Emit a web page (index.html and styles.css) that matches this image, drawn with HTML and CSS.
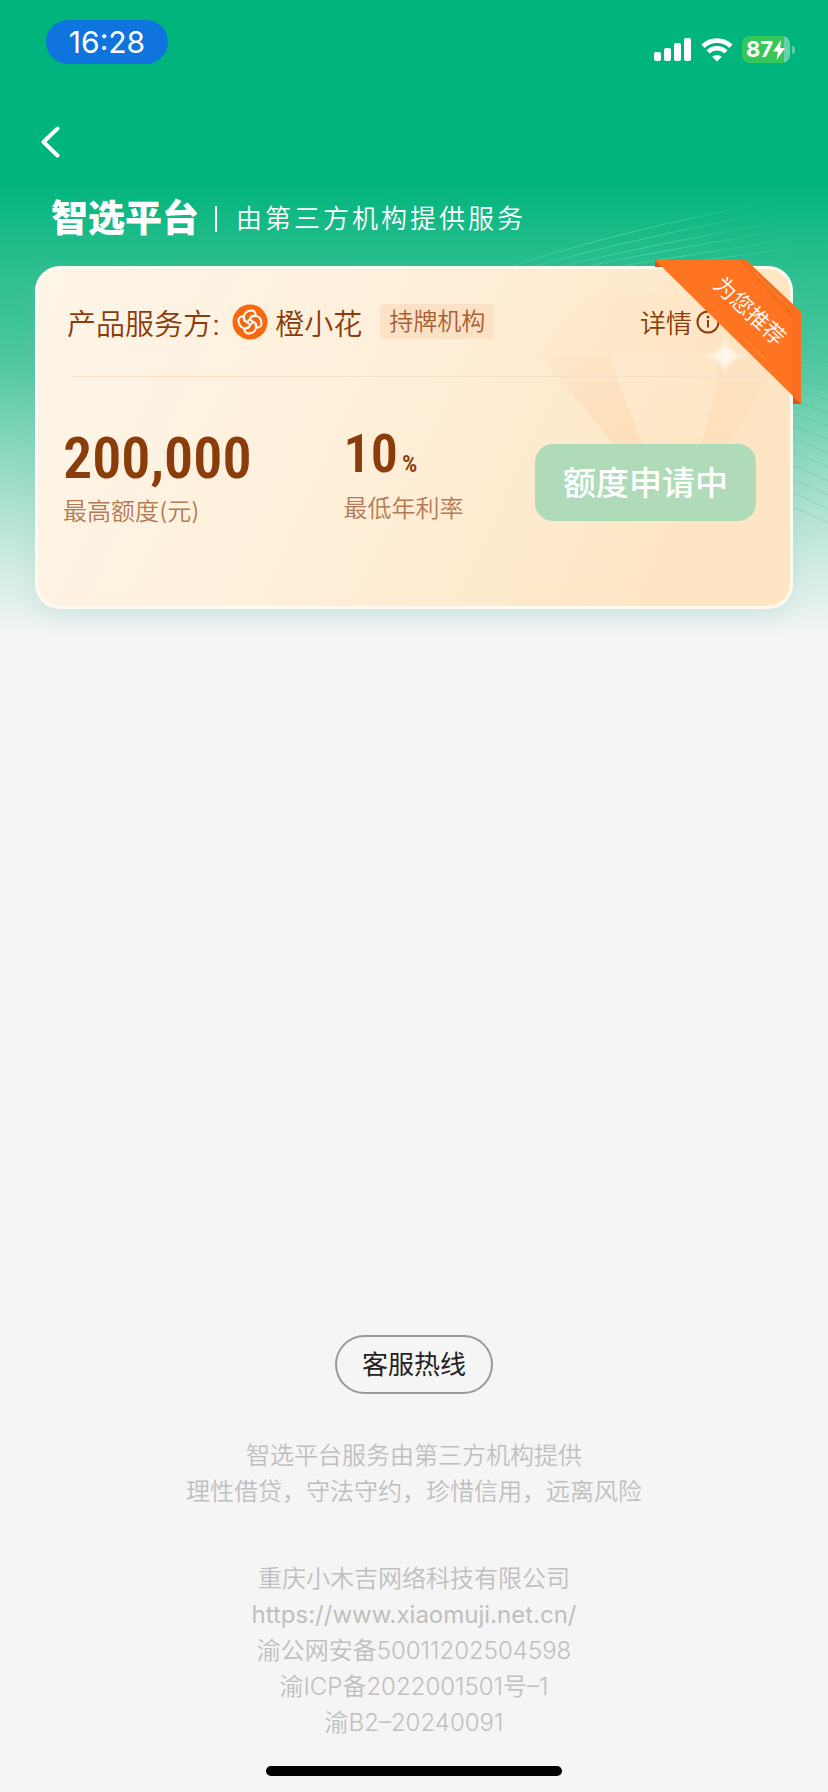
FILE: index.html
```html
<!DOCTYPE html>
<html lang="zh-CN">
<head>
<meta charset="utf-8">
<meta name="viewport" content="width=device-width, initial-scale=1">
<title>智选平台</title>
<link rel="stylesheet" href="styles.css">
</head>
<body>
<div class="page">
  <svg class="waves" viewBox="0 0 340 360" aria-hidden="true">
    <defs>
      <linearGradient id="fade" x1="0" x2="1" y1="0" y2="0">
        <stop offset="0" stop-color="#5fe0b0" stop-opacity="0.3"/>
        <stop offset="0.35" stop-color="#5fe0b0" stop-opacity="0.65"/>
        <stop offset="0.85" stop-color="#5fe0b0" stop-opacity="0"/>
      </linearGradient>
    </defs>
    <g fill="none" stroke="url(#fade)" stroke-width="1">
      <path d="M24 74Q160 30 340 0"/>
      <path d="M40 76Q160 42 340 10"/>
      <path d="M58 78Q170 50 340 22"/>
      <path d="M78 79Q180 56 340 32"/>
      <path d="M100 80Q190 64 340 42"/>
      <path d="M124 80Q200 70 340 52"/>
    </g>
    <g fill="none" stroke="#3aa98a" stroke-opacity="0.25" stroke-width="1">
      <path d="M290 146Q316 150 340 158"/>
      <path d="M290 158Q316 162 340 170"/>
      <path d="M290 170Q316 174 340 182"/>
      <path d="M290 182Q316 186 340 195"/>
      <path d="M290 194Q316 199 340 208"/>
      <path d="M290 206Q316 211 340 221"/>
      <path d="M290 218Q316 224 340 234"/>
      <path d="M290 230Q316 236 340 247"/>
      <path d="M290 243Q316 249 340 261"/>
      <path d="M290 256Q316 263 340 275"/>
      <path d="M290 269Q316 276 340 289"/>
      <path d="M290 282Q316 290 340 303"/>
      <path d="M290 296Q316 304 340 317"/>
      <path d="M290 310Q316 318 340 331"/>
    </g>
  </svg>

  <header class="status">
    <span class="clock">16:28</span>
    <div class="signals">
      <svg class="cell" viewBox="0 0 38 24" aria-label="信号">
        <rect x="0" y="14" width="7" height="9" rx="2"/>
        <rect x="10" y="10" width="7" height="13" rx="2"/>
        <rect x="20" y="5" width="7" height="18" rx="2"/>
        <rect x="30" y="0" width="7" height="23" rx="2"/>
      </svg>
      <svg class="wifi" viewBox="0 0 32 24" aria-label="无线网络">
        <path d="M2 8.200A20.500 20.500 0 0 1 30 8.200" stroke-width="4.600"/>
        <path d="M7 13.800A13 13 0 0 1 25 13.800" stroke-width="4.600"/>
        <path class="solid" d="M16 23.500L11.200 18.800A7 7 0 0 1 20.800 18.800Z"/>
      </svg>
      <div class="battery">
        <span class="level">87</span>
        <svg class="bolt" viewBox="0 0 12 20" aria-hidden="true"><path d="M8 0L0 11.500H5L3.500 20L12 8H7Z"/></svg>
      </div>
    </div>
  </header>

  <nav class="nav">
    <button class="back" type="button" aria-label="返回">
      <svg viewBox="0 0 20 32" aria-hidden="true"><path d="M17.500 2.500L3.500 16L17.500 29.500"/></svg>
    </button>
  </nav>

  <div class="heading">
    <h1 class="brand">智选平台</h1>
    <p class="slogan">由第三方机构提供服务</p>
  </div>

  <main class="main">
    <section class="card">
      <svg class="gem" viewBox="0 0 250 180" aria-hidden="true">
        <defs>
          <linearGradient id="g1" x1="0" y1="0" x2="0.500" y2="1">
            <stop offset="0" stop-color="#fddbb5" stop-opacity="0.200"/>
            <stop offset="1" stop-color="#fddbb5" stop-opacity="0.700"/>
          </linearGradient>
          <linearGradient id="g2" x1="1" y1="0" x2="0" y2="1">
            <stop offset="0" stop-color="#fddbb5" stop-opacity="0.100"/>
            <stop offset="1" stop-color="#fddbb5" stop-opacity="0.700"/>
          </linearGradient>
          <radialGradient id="glow">
            <stop offset="0" stop-color="#fff" stop-opacity="0.800"/>
            <stop offset="1" stop-color="#fff" stop-opacity="0"/>
          </radialGradient>
        </defs>
        <path fill="url(#g1)" d="M0 86H72Q76 104 80 116L104 176H76Z"/>
        <path fill="url(#g2)" d="M180 86H242L190 176H162L176 128Z"/>
        <path fill="#fddcb8" fill-opacity="0.150" d="M0 84L52 26H186L242 84H72Z"/>
        <path fill="url(#glow)" d="M186 66Q188 85 209 87Q188 89 186 108Q184 89 163 87Q184 85 186 66Z"/>
      </svg>

      <div class="provider">
        <span class="provider-label">产品服务方:</span>
        <svg class="logo" viewBox="0 0 36 36" aria-hidden="true">
          <circle cx="18" cy="18" r="17.500" fill="#f8690f"/>
          <g fill="none" stroke="#fff" stroke-width="1.900" stroke-linejoin="round" stroke-linecap="round">
            <path id="petal" d="M12.500 15.500C10.500 10.500 14 6.200 20.500 6.500C23 7.500 24 9.500 23.500 11.500C20.500 11.300 18.500 12.500 18 15L21 18"/>
            <use href="#petal" transform="rotate(90 18 18)"/>
            <use href="#petal" transform="rotate(180 18 18)"/>
            <use href="#petal" transform="rotate(270 18 18)"/>
          </g>
        </svg>
        <span class="provider-name">橙小花</span>
        <span class="tag">持牌机构</span>
        <button class="detail" type="button">详情<svg viewBox="0 0 24 24" aria-hidden="true"><circle cx="12" cy="12" r="10.500"/><path d="M12 10V17.500"/><circle class="dot" cx="12" cy="7" r="1.500"/></svg></button>
      </div>

      <div class="offer">
        <div class="metric amount">
          <strong class="value">200,000</strong>
          <span class="caption">最高额度(元)</span>
        </div>
        <div class="metric rate">
          <strong class="value">10<small>%</small></strong>
          <span class="caption">最低年利率</span>
        </div>
        <button class="apply" type="button">额度申请中</button>
      </div>

      <div class="ribbon">
        <svg viewBox="0 0 148 146" aria-hidden="true">
          <path fill="#d9561a" d="M0 0V7H9L6 0ZM147 144H138V134Z"/>
          <path fill="#ff7421" d="M0 0H91L146 52V144Z"/>
          <path fill="#f5691a" d="M91 0L146 52V144L137 135V58L84 0Z" fill-opacity="0.500"/>
          <path fill="none" stroke="#ff9a45" stroke-opacity="0.700" d="M97 10L134 47M88 78L113 102"/>
        </svg>
        <span class="ribbon-text">为您推荐</span>
      </div>
    </section>
  </main>

  <footer class="footer">
    <button class="hotline" type="button">客服热线</button>
    <p class="notice">智选平台服务由第三方机构提供<br>理性借贷，守法守约，珍惜信用，远离风险</p>
    <p class="notice">重庆小木吉网络科技有限公司<br><a class="site" href="https://www.xiaomuji.net.cn/">https://www.xiaomuji.net.cn/</a><br>渝公网安备50011202504598<br>渝ICP备2022001501号–1<br>渝B2–20240091</p>
    <div class="home-bar"></div>
  </footer>
</div>
</body>
</html>
```
FILE: styles.css
```css
* {
  box-sizing: border-box;
}

body {
  margin: 0;
  background: #f5f5f5;
  font-family: Inter, "Noto Sans CJK SC", sans-serif;
}

h1,
p {
  margin: 0;
}

button {
  margin: 0;
  padding: 0;
  border: 0;
  background: none;
  font: inherit;
  color: inherit;
}

.page {
  position: relative;
  display: flex;
  flex-direction: column;
  min-height: 100vh;
  background: linear-gradient(#00b47d 180px, #26bd8c 256px, #4fc7a0 360px, #8ad8bd 450px, #c2e7db 540px, #f5f5f5 636px);
}

.waves {
  position: absolute;
  top: 192px;
  right: 0;
  width: 340px;
  height: 360px;
}

.status {
  display: flex;
  justify-content: space-between;
  align-items: flex-start;
  padding: 20px 34px 0 46px;
  color: #fff;
}

.clock {
  width: 122px;
  border-radius: 22px;
  background: #0f74de;
  font-size: 30px;
  line-height: 44px;
  text-align: center;
}

.signals {
  display: flex;
  align-items: center;
  gap: 9px;
  padding-top: 16px;
}

.cell {
  width: 38px;
  height: 24px;
  fill: #fff;
}

.wifi {
  width: 32px;
  height: 24px;
  fill: none;
  stroke: #fff;
}

.wifi .solid {
  fill: #fff;
  stroke: none;
}

.battery {
  position: relative;
  display: flex;
  align-items: center;
  width: 48px;
  height: 27px;
  margin-right: 4px;
  padding-left: 4px;
  border-radius: 8px;
  background: linear-gradient(90deg, #35c759 88%, #66d2a8 88%);
}

.battery::after {
  content: "";
  position: absolute;
  right: -5px;
  top: 10px;
  width: 3px;
  height: 8px;
  border-radius: 0 3px 3px 0;
  background: #5fd0a8;
}

.level {
  font-size: 22px;
  font-weight: 700;
  line-height: 27px;
}

.bolt {
  width: 12px;
  height: 20px;
  fill: #fff;
}

.nav {
  padding: 62px 40px 0;
}

.back {
  display: block;
}

.back svg {
  display: block;
  width: 20px;
  height: 32px;
  fill: none;
  stroke: #fff;
  stroke-width: 4;
  stroke-linecap: round;
  stroke-linejoin: round;
}

.heading {
  display: flex;
  align-items: center;
  height: 56px;
  margin-top: 33px;
  padding-left: 51px;
  color: #fff;
}

.brand {
  font-size: 37px;
  font-weight: 900;
  line-height: 56px;
  font-style: oblique 5deg;
}

.slogan {
  margin-left: 16px;
  padding-left: 19px;
  border-left: 2px solid #fff;
  font-size: 26px;
  font-weight: 350;
  line-height: 26px;
  letter-spacing: 3px;
}

.main {
  padding: 19px 35px 0;
}

.card {
  position: relative;
  padding-bottom: 76px;
  border: 3px solid #fffaf0;
  border-radius: 25px;
  background: linear-gradient(115deg, #fdf5e9, #feefd9 45%, #fee6c4 85%);
  box-shadow: 0 8px 20px rgba(130, 190, 180, 0.200);
  color: #8a3c0a;
}

.gem {
  position: absolute;
  top: 0;
  right: 1px;
  width: 250px;
  height: 180px;
}

.provider {
  position: relative;
  display: flex;
  align-items: center;
  height: 108px;
  margin: 0 28px 0 34px;
  padding-bottom: 2px;
  border-bottom: 1px solid #f4dfc7;
  font-size: 29px;
  font-weight: 350;
}

.provider-label {
  margin-left: -5px;
}

.logo {
  width: 36px;
  height: 36px;
  margin: 0 7px 0 12px;
}

.tag {
  margin-left: 18px;
  padding: 0 9px;
  border-radius: 5px;
  background: #fbe1c6;
  color: #a85f33;
  font-size: 24px;
  font-weight: 350;
  line-height: 35px;
}

.detail {
  display: flex;
  align-items: center;
  gap: 4px;
  margin-left: auto;
  margin-right: 42px;
  font-size: 26px;
  font-weight: 350;
}

.detail svg {
  width: 24px;
  height: 24px;
  fill: none;
  stroke: #8a3c0a;
  stroke-width: 2;
}

.detail .dot {
  fill: #8a3c0a;
  stroke: none;
}

.offer {
  position: relative;
  display: grid;
  grid-template-columns: 280fr 191fr 221px;
  align-items: start;
  padding: 47px 34px 0 25px;
}

.metric {
  display: flex;
  flex-direction: column;
}

.value {
  display: flex;
  align-items: baseline;
  height: 70px;
  font-family: "Roboto Condensed", Roboto, sans-serif;
  font-size: 58px;
  line-height: 68px;
  font-weight: 600;
}

.value small {
  margin-left: 4px;
  font-size: 24px;
  line-height: 24px;
}

.rate .value {
  height: 67px;
  font-size: 54px;
  line-height: 60px;
}

.caption {
  color: #b27a55;
  font-size: 24px;
  font-weight: 350;
  line-height: 36px;
}

.apply {
  margin-top: 20px;
  padding-top: 2px;
  border-radius: 18px;
  background: #b0dbb9;
  color: #fff;
  font-size: 33px;
  font-weight: 500;
  line-height: 75px;
}

.ribbon {
  position: absolute;
  top: -9px;
  right: -13px;
  width: 148px;
  height: 146px;
}

.ribbon svg {
  display: block;
  width: 148px;
  height: 146px;
}

.ribbon-text {
  position: absolute;
  top: 35px;
  left: 47px;
  width: 96px;
  color: #fff;
  font-size: 22px;
  font-weight: 350;
  line-height: 32px;
  text-align: center;
  white-space: nowrap;
  transform: rotate(43deg);
}

.footer {
  display: flex;
  flex-direction: column;
  align-items: center;
  margin-top: auto;
  padding: 60px 20px 16px;
  color: #bfbfbf;
  font-size: 24px;
  font-weight: 350;
  line-height: 36px;
  text-align: center;
}

.hotline {
  width: 158px;
  height: 59px;
  margin-bottom: 44px;
  border: 2px solid #999;
  border-radius: 30px;
  color: #222;
  font-size: 26px;
  font-weight: 400;
}

.notice {
  margin-bottom: 51px;
}

.notice + .notice {
  margin-bottom: 25px;
}

.site {
  color: inherit;
  font-weight: 400;
  text-decoration: none;
}

.home-bar {
  width: 296px;
  height: 10px;
  border-radius: 5px;
  background: #000;
}
```
